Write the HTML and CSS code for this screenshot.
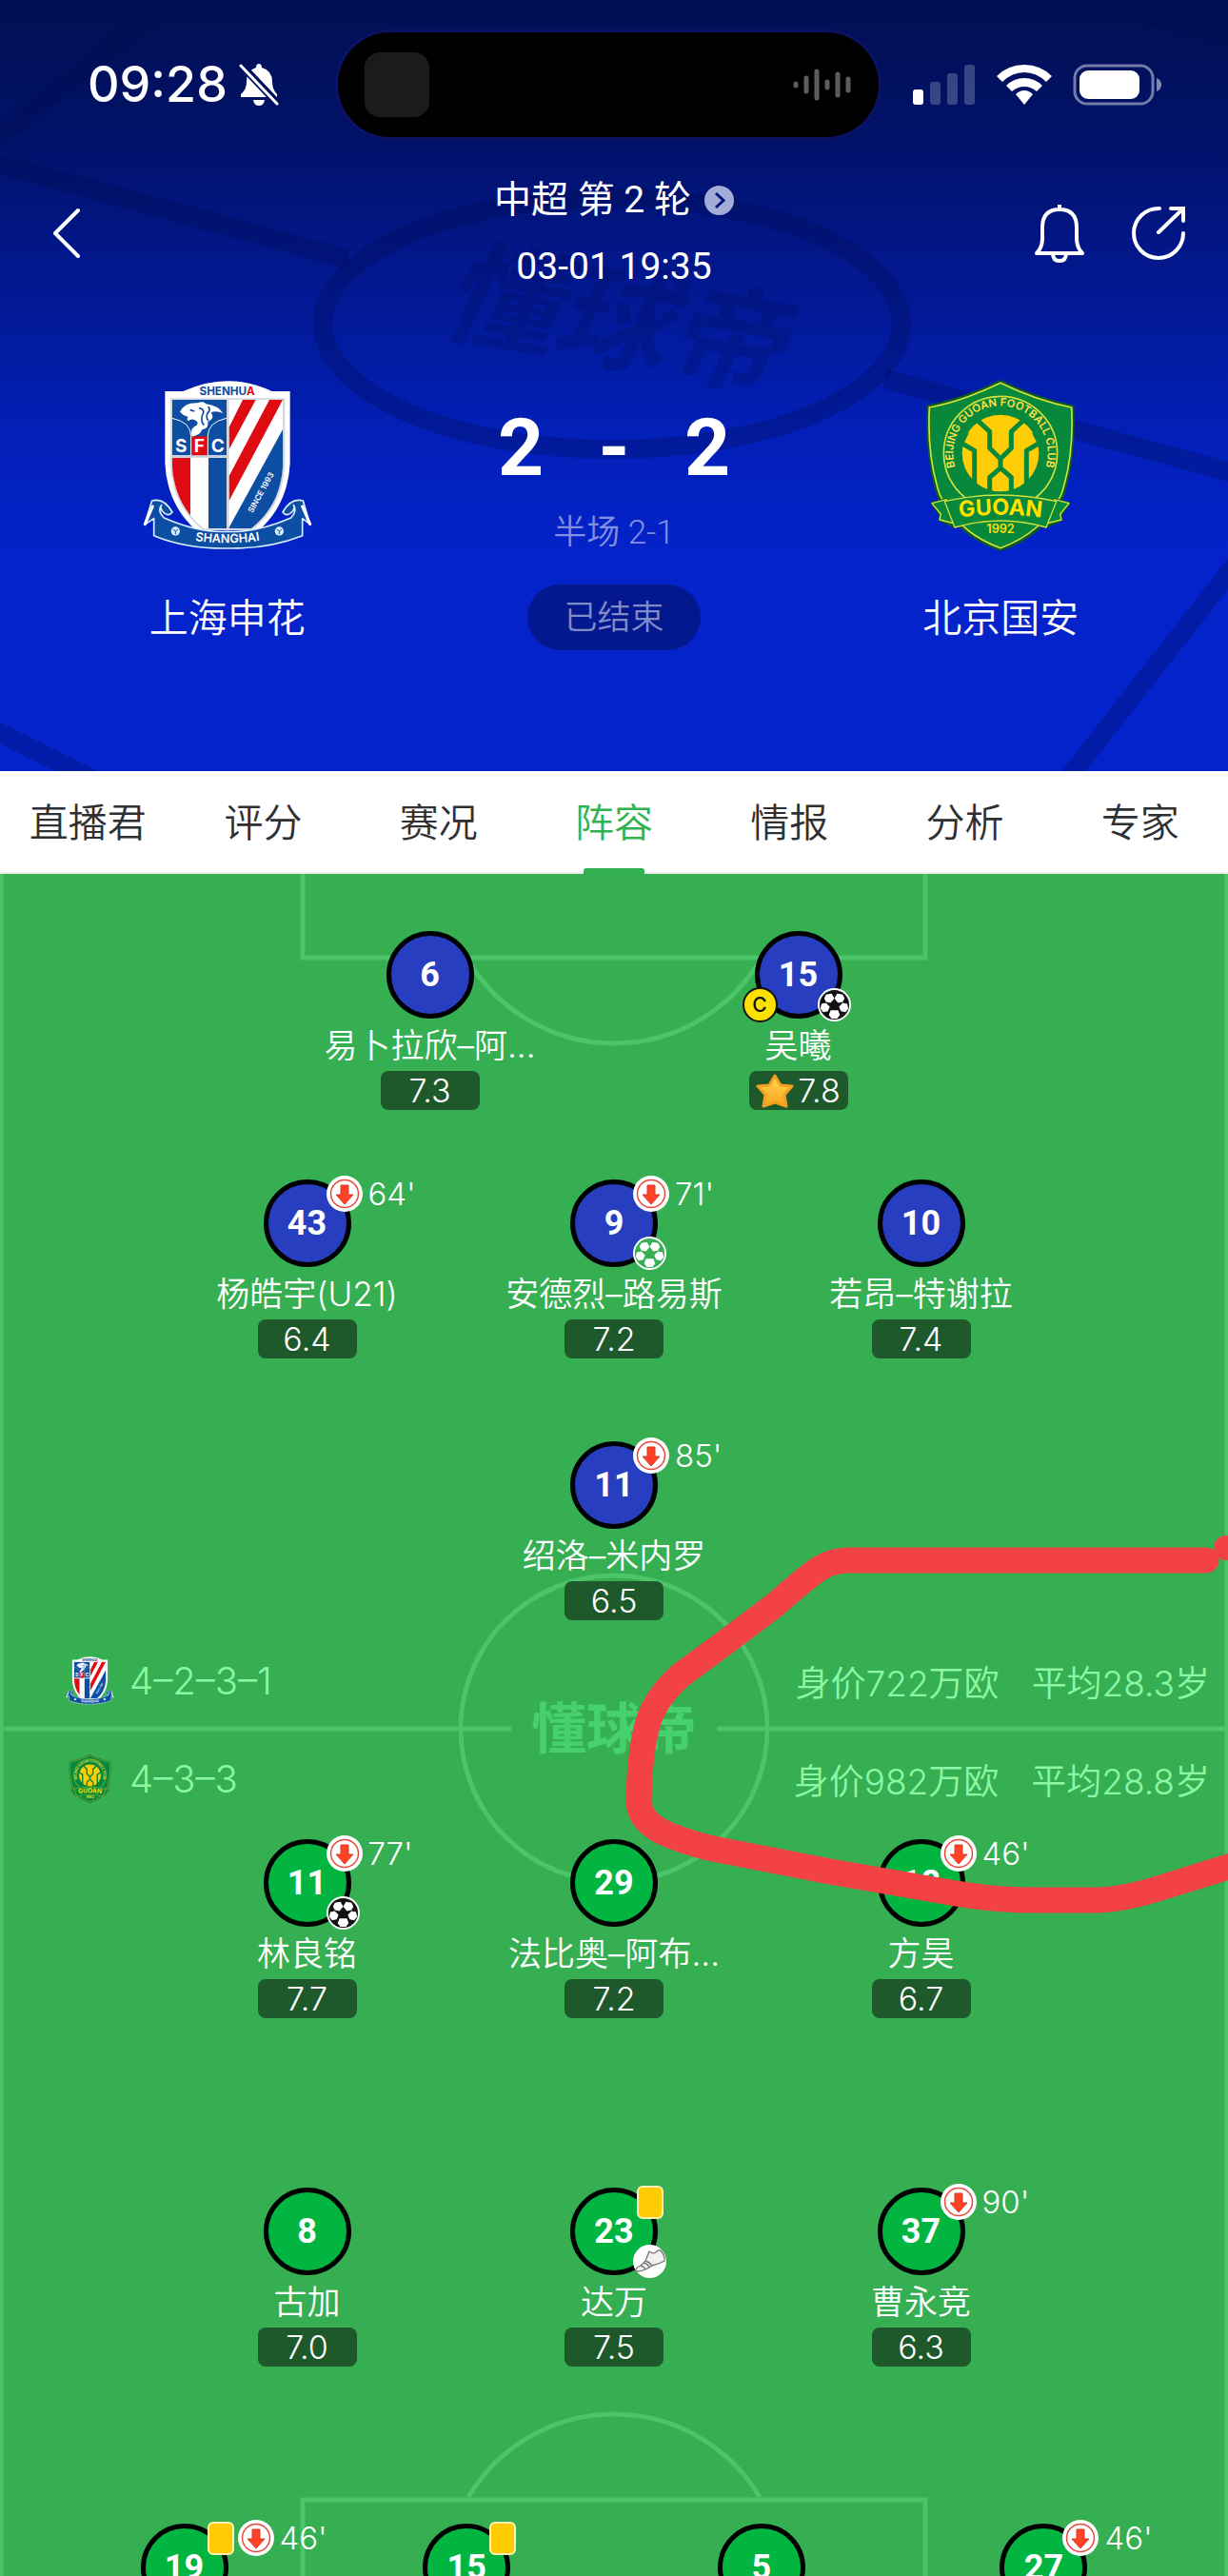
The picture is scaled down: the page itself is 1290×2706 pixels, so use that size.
FILE: index.html
```
<!DOCTYPE html>
<html lang="zh-CN">
<head>
<meta charset="utf-8">
<meta name="viewport" content="width=device-width, initial-scale=1">
<title>上海申花 2-2 北京国安 阵容</title>
<link rel="stylesheet" href="styles.css">
</head>
<body>

<!-- shared icons -->
<svg class="defs" aria-hidden="true">
<defs>
<symbol id="shenhua" viewBox="60 57 540 540">
	<clipPath id="sh-in"><path d="M155 120H505V320Q500 450 405 525H255Q160 450 155 320Z"/></clipPath>
	<path fill="#fff" d="M133 93H190Q330 28 470 93H527V320Q520 450 430 530H230Q140 450 133 320Z"/>
	<path fill="#d5d9e2" d="M150 115H511V320Q506 455 408 530H252Q155 455 150 320Z"/>
	<g clip-path="url(#sh-in)">
		<path fill="#fff" d="M155 120H505V530H155Z"/>
		<path fill="#0b4ea2" d="M155 120H327V295H155ZM270 303H327V530H270Z"/>
		<path fill="#df0b12" d="M155 303H213V530H155ZM378 120H419L335 276V206ZM462 120H504L335 438V360ZM216 235H267V295H216Z"/>
		<path fill="#0b4ea2" d="M506 210V530H335V522Z"/>
		<path fill="none" stroke="#c9ced9" stroke-width="6" d="M331 118V530M155 299H331"/>
		<path fill="none" stroke="#fff" stroke-width="3" d="M155 178Q215 190 215 235V295M327 178Q268 190 268 235V295"/>
	</g>
	<path fill="#fff" d="M180 158Q195 128 235 130Q255 122 262 133Q300 138 316 162Q292 152 278 160Q292 178 268 190Q272 210 250 214Q244 232 218 236Q210 215 226 204Q240 198 234 188Q218 176 208 186Q198 184 206 174Q190 170 180 158Z"/>
	<path fill="none" stroke="#0b4ea2" stroke-width="5" d="M240 146Q262 150 250 170Q246 190 256 200M268 142Q280 148 266 164Q262 178 270 186M212 152L226 156"/>
	<g font-family="Inter, sans-serif" font-weight="700" text-anchor="middle">
		<text x="329" y="105" font-size="35" fill="#0b4ea2">SHENHU<tspan fill="#df0b12">A</tspan></text>
		<g fill="#fff" font-size="57"><text x="184" y="284">S</text><text x="241" y="284">F</text><text x="299" y="284">C</text></g>
		<text font-size="25" font-weight="600" fill="#fff" transform="translate(443 416) rotate(-61)">SINCE 1993</text>
	</g>
	<path fill="#0b4ea2" stroke="#d8efff" stroke-width="5" stroke-linejoin="round" d="M92 438Q130 428 156 474Q142 492 124 470Q116 456 122 452Q108 470 130 492Q240 540 330 535Q420 540 530 492Q550 470 538 452Q544 458 536 470Q518 492 504 474Q530 428 568 438L590 512L566 494V548Q460 590 330 588Q200 590 98 548V494L68 514Z"/>
	<path fill="none" stroke="#fff" stroke-width="9" stroke-linecap="round" d="M94 456L70 512M566 456L590 512"/>
	<path id="sh-arc" fill="none" d="M195 558Q330 584 465 558"/>
	<text font-family="Inter, sans-serif" font-weight="600" font-size="38" fill="#fff" text-anchor="middle"><textPath href="#sh-arc" startOffset="50%">SHANGHAI</textPath></text>
	<g fill="#d8efff"><circle cx="166" cy="534" r="14"/><circle cx="493" cy="534" r="14"/></g>
	<g fill="none" stroke="#0b4ea2" stroke-width="3"><path d="M158 528l8 6 8-6M166 534v10M485 528l8 6 8-6M493 534v10"/></g>
</symbol>

<symbol id="guoan" viewBox="30 57 540 540">
	<path fill="#0c5b22" d="M300 57Q420 115 532 137Q540 300 500 425Q440 550 300 597Q160 550 100 425Q60 300 68 137Q180 115 300 57Z"/>
	<path fill="#07883a" stroke="#d2e23c" stroke-width="5" d="M300 67Q418 124 524 144Q532 300 491 420Q434 538 300 587Q166 538 109 420Q68 300 76 144Q182 124 300 67Z"/>
	<circle cx="300" cy="288" r="179" fill="#07883a" stroke="#d2e23c" stroke-width="5"/>
	<circle cx="300" cy="288" r="121" fill="#ffcd05"/>
	<path fill="none" stroke="#07883a" stroke-width="15" stroke-linejoin="round" d="M228 185L266 220V272L300 306L334 272V220L372 185M180 258L218 280V390M420 258L382 280V390M300 306V346M300 335L266 364V412M300 335L334 364V412"/>
	<path fill="#07883a" d="M170 244L202 222L182 262ZM430 244L398 222L418 262Z"/>
	<path id="go-arc" fill="none" d="M178 374A149 149 0 1 1 422 374"/>
	<text font-family="Inter, sans-serif" font-weight="600" font-size="34" fill="#ffe14a" text-anchor="middle"><textPath href="#go-arc" startOffset="50%">BEIJING GUOAN FOOTBALL CLUB</textPath></text>
	<path fill="#07883a" stroke="#0c5b22" stroke-width="9" stroke-linejoin="round" d="M84 446L130 434L156 520L108 498L112 486ZM516 446L470 434L444 520L492 498L488 486Z"/>
	<path fill="#07883a" stroke="#d2e23c" stroke-width="4" stroke-linejoin="round" d="M84 446L130 434L156 510L108 498L112 480ZM516 446L470 434L444 510L492 498L488 480Z"/>
	<path fill="#07883a" stroke="#d2e23c" stroke-width="4" stroke-linejoin="round" d="M124 440Q300 400 476 440L444 522Q300 480 156 522Z"/>
	<path id="go-name" fill="none" d="M150 494Q300 471 450 494"/>
	<g font-family="Inter, sans-serif" text-anchor="middle" fill="#ffe000" font-weight="700">
		<text font-size="70"><textPath href="#go-name" startOffset="50%">GUOAN</textPath></text>
		<text x="300" y="539" font-size="38" font-weight="600">1992</text>
	</g>
</symbol>

<symbol id="ball" viewBox="-18 -18 36 36">
	<circle r="18" fill="#fff"/>
	<circle r="16" fill="currentColor"/>
	<g fill="#fff">
		<path d="M-9-11L-3-12L0-7L-4-2L-9-3L-11-7Z"/>
		<path d="M9-11L3-12L0-7L4-2L9-3L11-7Z"/>
		<path d="M-14-1L-9-2L-5 2L-7 7L-12 8L-15 4Z"/>
		<path d="M14-1L9-2L5 2L7 7L12 8L15 4Z"/>
		<path d="M-4 6H4L6 11L3 15H-3L-6 11Z"/>
	</g>
	<path d="M0-5L5-1L3 5H-3L-5-1Z" fill="currentColor"/>
</symbol>

<symbol id="off" viewBox="-19 -19 38 38">
	<circle r="19" fill="#fff"/>
	<circle r="14.5" fill="none" stroke="#e8493a" stroke-width="1.5"/>
	<path fill="#ff4128" stroke="#d83a22" stroke-width="1" d="M-4-9H4V1H9L0 11L-9 1H-4Z"/>
</symbol>

<symbol id="boot" viewBox="0 0 35 35">
	<circle cx="17.500" cy="17.500" r="17.500" fill="#fff"/>
	<path fill="#f1f1f1" stroke="#777" stroke-width="1.300" stroke-linejoin="round" d="M3 28Q2 24 8 22L13 17L17 7Q21 10 24 8Q26 5 29 6Q34 12 33 17Q28 20 20 22Q12 28 3 28Z"/>
	<path fill="none" stroke="#777" stroke-width="1.300" d="M8 22Q12 23 13 26M11 19Q16 20 17 24M13 17Q17 18 20 22"/>
</symbol>

<symbol id="star" viewBox="0 0 40 36">
	<linearGradient id="gold" x1="0" y1="0" x2="0" y2="1"><stop offset="0" stop-color="#ffd84f"/><stop offset="1" stop-color="#fba31d"/></linearGradient>
	<path fill="url(#gold)" stroke="#f2a024" stroke-width="3" stroke-linejoin="round" d="M20 2L26 12L38 13L30 22L32 34L20 30L8 34L10 22L2 13L14 12Z"/>
</symbol>
</defs>
</svg>

<div class="page">

<header class="top">
	<svg class="top-bg" viewBox="0 0 1290 810" preserveAspectRatio="xMidYMin slice" aria-hidden="true">
		<g fill="none" stroke="#000b4a" stroke-opacity=".28" stroke-width="20">
			<ellipse cx="643" cy="340" rx="304" ry="132"/>
			<path d="M193 -10L-10 150M-10 170L365 272M930 398L1300 498M1115 -10L1300 42M1300 590L1120 820M-10 765L110 825"/>
		</g>
		<text class="top-mark" x="643" y="378" transform="rotate(10 643 340)">懂球帝</text>
	</svg>

	<div class="status">
		<div class="status-left">
			<span class="clock">09:28</span>
			<svg width="42" height="46" viewBox="0 0 42 46">
				<path fill="#fff" d="M21 1q3 0 3 4q11 3 11 15q0 8 5 13v3H2v-3q6-5 6-13Q8 8 18 5q0-4 3-4ZM15 39h12q-1 6-6 6t-6-6Z"/>
				<path stroke="#01105e" stroke-width="8" d="M3 3L40 42"/>
				<path stroke="#fff" stroke-width="3" stroke-linecap="round" d="M2 3L40 43"/>
			</svg>
		</div>
		<div class="island">
			<span class="island-app"></span>
			<svg width="62" height="34" viewBox="0 0 62 34">
				<path stroke="#5d5d5d" stroke-width="5" stroke-linecap="round" d="M3 16v2M14 10v14M25 3v28M36 14v6M47 6v22M58 11v12"/>
			</svg>
		</div>
		<div class="status-right">
			<svg width="66" height="42" viewBox="0 0 66 42">
				<rect x="0" y="26" width="11" height="16" rx="3" fill="#fff"/>
				<g fill="#fff" opacity=".22"><rect x="18" y="18" width="11" height="24" rx="3"/><rect x="36" y="9" width="11" height="33" rx="3"/><rect x="54" y="0" width="11" height="42" rx="3"/></g>
			</svg>
			<svg width="58" height="42" viewBox="0 0 58 42">
				<path fill="#fff" d="M29 0Q46 0 58 12L52 18Q42 8 29 8T6 18L0 12Q12 0 29 0ZM29 14Q40 14 48 22L42 28Q36 23 29 23T16 28L10 22Q18 14 29 14ZM29 27Q34 27 38 31L29 42L20 31Q24 27 29 27Z"/>
			</svg>
			<svg width="94" height="44" viewBox="0 0 94 44">
				<rect x="2" y="2" width="82" height="40" rx="13" fill="none" stroke="#fff" stroke-opacity=".45" stroke-width="3"/>
				<rect x="7" y="7" width="63" height="30" rx="9" fill="#fff"/>
				<path fill="#fff" fill-opacity=".5" d="M88 15q5 2 5 7t-5 7Z"/>
			</svg>
		</div>
	</div>

	<div class="bar">
		<button class="icon-btn back" aria-label="返回">
			<svg width="30" height="54" viewBox="0 0 30 54"><path fill="none" stroke="#fff" stroke-width="4" stroke-linecap="round" stroke-linejoin="round" d="M27 3L3 27L27 51"/></svg>
		</button>
		<div class="round">
			<a href="#">中超 第 2 轮
				<svg width="31" height="31" viewBox="0 0 31 31"><circle cx="15.500" cy="15.500" r="15.500" fill="#a3acd9"/><path fill="none" stroke="#02157f" stroke-width="3" d="M12 8L20 15.500L12 23"/></svg>
			</a>
			<time>03-01 19:35</time>
		</div>
		<div class="bar-right">
			<button class="icon-btn" aria-label="提醒">
				<svg width="54" height="62" viewBox="0 0 54 62"><path fill="none" stroke="#fff" stroke-width="4" stroke-linejoin="round" d="M27 1V6M3 52Q9 46 9 36V25Q9 6 27 6T45 25V36Q45 46 51 52ZM20 52Q20 60 27 60T34 52"/></svg>
			</button>
			<button class="icon-btn" aria-label="分享">
				<svg width="58" height="58" viewBox="0 0 58 58"><path fill="none" stroke="#fff" stroke-width="4" stroke-linecap="round" d="M30 3A26 26 0 1 0 55 29M29 28L54 4M42 3H55V16"/></svg>
			</button>
		</div>
	</div>

	<div class="match">
		<div class="team">
			<svg class="crest"><use href="#shenhua"/></svg>
			<div class="team-name">上海申花</div>
		</div>
		<div class="result">
			<div class="score"><span>2</span><span>-</span><span>2</span></div>
			<div class="half">半场 2-1</div>
			<div class="state">已结束</div>
		</div>
		<div class="team">
			<svg class="crest"><use href="#guoan"/></svg>
			<div class="team-name">北京国安</div>
		</div>
	</div>
</header>

<nav class="tabs">
	<a href="#">直播君</a>
	<a href="#">评分</a>
	<a href="#">赛况</a>
	<a href="#" class="on">阵容</a>
	<a href="#">情报</a>
	<a href="#">分析</a>
	<a href="#">专家</a>
</nav>

<main class="pitch">
	<svg class="lines" viewBox="0 0 1290 1788" preserveAspectRatio="xMidYMin slice" aria-hidden="true">
		<g fill="none" stroke="#4bc46a" stroke-width="5">
			<path d="M1 0V1788M1289 0V1788M318 0V88H972V0M318 1788V1708H972V1788M0 898H537M753 898H1290"/>
			<path d="M492 91A178 178 0 0 0 798 91M492 1705A178 178 0 0 1 798 1705"/>
			<circle cx="645" cy="898" r="161"/>
		</g>
		<text class="mark" x="645" y="919">懂球帝</text>
	</svg>

	<!-- home -->
	<section class="row home">
		<div class="player">
			<div class="shirt">6</div>
			<div class="name">易卜拉欣–阿...</div>
			<div class="rate">7.3</div>
		</div>
		<div class="player">
			<div class="shirt">15
				<span class="cap">C</span>
				<svg class="goal"><use href="#ball"/></svg>
			</div>
			<div class="name">吴曦</div>
			<div class="rate best"><svg width="40" height="36"><use href="#star"/></svg>7.8</div>
		</div>
	</section>
	<section class="row home">
		<div class="player">
			<div class="shirt">43
				<span class="events"><svg class="off"><use href="#off"/></svg>64'</span>
			</div>
			<div class="name">杨皓宇(U21)</div>
			<div class="rate">6.4</div>
		</div>
		<div class="player">
			<div class="shirt">9
				<span class="events"><svg class="off"><use href="#off"/></svg>71'</span>
				<svg class="goal pen"><use href="#ball"/></svg>
			</div>
			<div class="name">安德烈–路易斯</div>
			<div class="rate">7.2</div>
		</div>
		<div class="player">
			<div class="shirt">10</div>
			<div class="name">若昂–特谢拉</div>
			<div class="rate">7.4</div>
		</div>
	</section>
	<section class="row home">
		<div class="player">
			<div class="shirt">11
				<span class="events"><svg class="off"><use href="#off"/></svg>85'</span>
			</div>
			<div class="name">绍洛–米内罗</div>
			<div class="rate">6.5</div>
		</div>
	</section>

	<section class="forms">
		<div class="form">
			<svg class="mini"><use href="#shenhua"/></svg>
			<span class="shape">4–2–3–1</span>
			<span class="worth">身价722万欧</span>
			<span>平均28.3岁</span>
		</div>
		<div class="form">
			<svg class="mini"><use href="#guoan"/></svg>
			<span class="shape">4–3–3</span>
			<span class="worth">身价982万欧</span>
			<span>平均28.8岁</span>
		</div>
	</section>

	<!-- away -->
	<section class="row away">
		<div class="player">
			<div class="shirt">11
				<span class="events"><svg class="off"><use href="#off"/></svg>77'</span>
				<svg class="goal"><use href="#ball"/></svg>
			</div>
			<div class="name">林良铭</div>
			<div class="rate">7.7</div>
		</div>
		<div class="player">
			<div class="shirt">29</div>
			<div class="name">法比奥–阿布...</div>
			<div class="rate">7.2</div>
		</div>
		<div class="player">
			<div class="shirt">18
				<span class="events"><svg class="off"><use href="#off"/></svg>46'</span>
			</div>
			<div class="name">方昊</div>
			<div class="rate">6.7</div>
		</div>
	</section>
	<section class="row away">
		<div class="player">
			<div class="shirt">8</div>
			<div class="name">古加</div>
			<div class="rate">7.0</div>
		</div>
		<div class="player">
			<div class="shirt">23
				<span class="events"><i class="card"></i></span>
				<svg class="goal"><use href="#boot"/></svg>
			</div>
			<div class="name">达万</div>
			<div class="rate">7.5</div>
		</div>
		<div class="player">
			<div class="shirt">37
				<span class="events"><svg class="off"><use href="#off"/></svg>90'</span>
			</div>
			<div class="name">曹永竞</div>
			<div class="rate">6.3</div>
		</div>
	</section>
	<section class="row away back4">
		<div class="player">
			<div class="shirt">19
				<span class="events"><i class="card"></i><svg class="off"><use href="#off"/></svg>46'</span>
			</div>
		</div>
		<div class="player">
			<div class="shirt">15
				<span class="events"><i class="card"></i></span>
			</div>
		</div>
		<div class="player">
			<div class="shirt">5</div>
		</div>
		<div class="player">
			<div class="shirt">27
				<span class="events"><svg class="off"><use href="#off"/></svg>46'</span>
			</div>
		</div>
	</section>

	<!-- red pen mark -->
	<svg class="pen-mark" viewBox="0 0 1290 1788" preserveAspectRatio="xMidYMin slice" aria-hidden="true">
		<path fill="none" stroke="#f24244" stroke-width="27" stroke-linejoin="round" stroke-linecap="round" d="M1267 721H892Q872 721 856 733Q840 745 814 768L765 805L716 841Q692 862 683 885Q672 915 671 975Q672 992 691 1004Q714 1016 749 1024L872 1048L987 1068Q1040 1078 1085 1078H1150Q1180 1078 1226 1063L1300 1040"/>
		<circle cx="1288" cy="708" r="13" fill="#f24244"/>
	</svg>
</main>

</div>
</body>
</html>
```
FILE: styles.css
```
*{
	box-sizing:border-box;
}
body{
	margin:0;
	font-family:Inter, "Noto Sans CJK SC", sans-serif;
	color:#fff;
	background:#36af52;
}
a{
	color:inherit;
	text-decoration:none;
}
.defs{
	position:absolute;
	width:0;
	height:0;
}
.page{
	height:100vh;
	display:flex;
	flex-direction:column;
	overflow:hidden;
}

/* header */
.top{
	position:relative;
	flex:none;
	padding:34px 0 127px;
	background:linear-gradient(#010f52 0, #01126a 150px, #02178a 270px, #021ca4 380px, #0320bb 470px, #0423cb 600px);
}
.top-bg{
	position:absolute;
	left:0;
	top:0;
	width:100%;
	height:100%;
}
.top-mark{
	font-family:"Noto Sans CJK SC", sans-serif;
	font-size:120px;
	font-weight:700;
	font-style:italic;
	text-anchor:middle;
	fill:#000b4a;
	fill-opacity:.22;
}
.status, .bar, .match{
	position:relative;
}
.status{
	display:grid;
	grid-template-columns:1fr 568px 1fr;
	align-items:center;
	padding-right:12px;
}
.status-left{
	display:flex;
	align-items:center;
	gap:12px;
	padding-left:92px;
}
.clock{
	font-size:52px;
	line-height:60px;
	font-weight:500;
}
.island{
	display:flex;
	align-items:center;
	justify-content:space-between;
	height:110px;
	padding:0 28px;
	border-radius:55px;
	background:#000;
	box-shadow:0 0 0 3px #0c1264;
}
.island-app{
	width:68px;
	height:68px;
	border-radius:16px;
	background:#1b1b1b;
}
.status-right{
	display:flex;
	align-items:center;
	justify-content:flex-end;
	gap:22px;
	padding-right:57px;
}
.bar{
	display:grid;
	grid-template-columns:1fr auto 1fr;
	align-items:center;
	margin-top:31px;
	padding:0 44px;
}
.icon-btn{
	display:flex;
	padding:0;
	border:0;
	background:none;
}
.back{
	padding-left:11px;
}
.round{
	text-align:center;
	font-family:Roboto, "Noto Sans CJK SC", sans-serif;
	font-size:39px;
	line-height:70px;
}
.round a{
	display:flex;
	align-items:center;
	justify-content:center;
	gap:14px;
}
.round time{
	display:block;
}
.bar-right{
	display:flex;
	align-items:center;
	justify-content:flex-end;
	gap:48px;
}
.match{
	display:grid;
	grid-template-columns:37% 26% 37%;
	margin-top:84px;
	text-align:center;
}
.crest{
	display:block;
	width:180px;
	height:180px;
	margin:0 auto;
}
.team-name{
	margin-top:40px;
	font-size:41px;
	line-height:60px;
	font-weight:350;
}
.result{
	display:flex;
	flex-direction:column;
	align-items:center;
	padding-top:22px;
}
.score{
	display:grid;
	grid-template-columns:repeat(3, 98px);
	font-family:Roboto, sans-serif;
	font-size:84px;
	line-height:100px;
	font-weight:700;
}
.half{
	margin-top:15px;
	font-family:Roboto, "Noto Sans CJK SC", sans-serif;
	font-size:35px;
	line-height:48px;
	font-weight:350;
	color:#8190e2;
}
.state{
	margin-top:30px;
	padding:0 38px;
	border-radius:35px;
	background:#03188f;
	color:#818bc7;
	font-size:35px;
	line-height:69px;
	font-weight:350;
}

/* tabs */
.tabs{
	flex:none;
	display:grid;
	grid-template-columns:repeat(7, 1fr);
	background:#fff;
	color:#2f3033;
	font-size:41px;
	line-height:108px;
	font-weight:350;
	text-align:center;
	border-bottom:2px solid #eef0ee;
	height:108px;
}
.tabs a{
	position:relative;
}
.tabs .on{
	color:#30b34e;
}
.tabs .on:after{
	content:"";
	position:absolute;
	left:50%;
	top:102px;
	width:64px;
	height:6px;
	margin-left:-32px;
	border-radius:3px 3px 0 0;
	background:#30b34e;
}

/* pitch */
.pitch{
	position:relative;
	flex:1;
	min-height:0;
	padding-top:60px;
	overflow:hidden;
	background:#36af52;
}
.lines, .pen-mark{
	position:absolute;
	left:0;
	top:0;
	width:100%;
	height:100%;
	pointer-events:none;
}
.mark{
	font-family:"Noto Sans CJK SC", sans-serif;
	font-size:58px;
	font-weight:700;
	text-anchor:middle;
	fill:#46d16e;
}
.row{
	position:relative;
	display:flex;
	justify-content:center;
	margin-bottom:73px;
}
.player{
	width:25%;
	display:flex;
	flex-direction:column;
	align-items:center;
}
.row:nth-of-type(1) .player{
	width:30%;
}
.row:nth-of-type(2){
	margin-bottom:87px;
}
.row:nth-of-type(3){
	margin-bottom:12px;
}
.row.away{
	margin-bottom:178px;
}
.row.away + .row.away{
	margin-bottom:165px;
}
.shirt{
	position:relative;
	width:92px;
	height:92px;
	border:5px solid #000;
	border-radius:50%;
	font-family:Roboto, sans-serif;
	font-size:36px;
	line-height:82px;
	font-weight:700;
	text-align:center;
}
.home .shirt{
	background:#273ec0;
}
.away .shirt{
	background:#02b541;
}
.events{
	position:absolute;
	left:61px;
	top:-9px;
	display:flex;
	align-items:center;
	gap:4px;
	height:38px;
	font-family:Inter, sans-serif;
	font-size:33px;
	font-weight:300;
	line-height:34px;
}
.off{
	width:38px;
	height:38px;
	margin-right:2px;
}
.card{
	width:28px;
	height:35px;
	margin-left:4px;
	border:2px solid #fff0b5;
	border-radius:6px;
	background:#ffcb05;
}
.goal{
	position:absolute;
	left:61px;
	top:55px;
	width:35px;
	height:35px;
	color:#111;
}
.pen{
	color:#36af52;
}
.cap{
	position:absolute;
	left:-18px;
	top:54px;
	width:37px;
	height:37px;
	border:2px solid #111;
	border-radius:50%;
	background:#ffe100;
	color:#111;
	font-family:Inter, sans-serif;
	font-size:21px;
	line-height:33px;
	font-weight:500;
}
.name{
	margin-top:8px;
	font-size:35px;
	line-height:40px;
	font-weight:350;
	white-space:nowrap;
}
.rate{
	width:104px;
	height:41px;
	margin-top:7px;
	border-radius:8px;
	background:#1d592b;
	font-size:34px;
	line-height:41px;
	font-weight:350;
	text-align:center;
}
.best{
	display:flex;
	align-items:center;
	justify-content:center;
	gap:4px;
}
.forms{
	position:relative;
	margin-bottom:12px;
}
.form{
	display:flex;
	align-items:center;
	height:103px;
	padding:0 19px 0 69px;
	color:#8cf7a6;
	font-size:37px;
	font-weight:350;
}
.mini{
	width:51px;
	height:51px;
	margin-right:16px;
}
.shape{
	font-size:40px;
	font-weight:300;
}
.worth{
	margin-left:auto;
	margin-right:34px;
}
.row.back4{
	display:grid;
	grid-template-columns:30% 16% 8% 16% 30%;
}
.back4 .player{
	width:auto;
}
.back4 .player:nth-child(3){
	grid-column:4;
}
```
